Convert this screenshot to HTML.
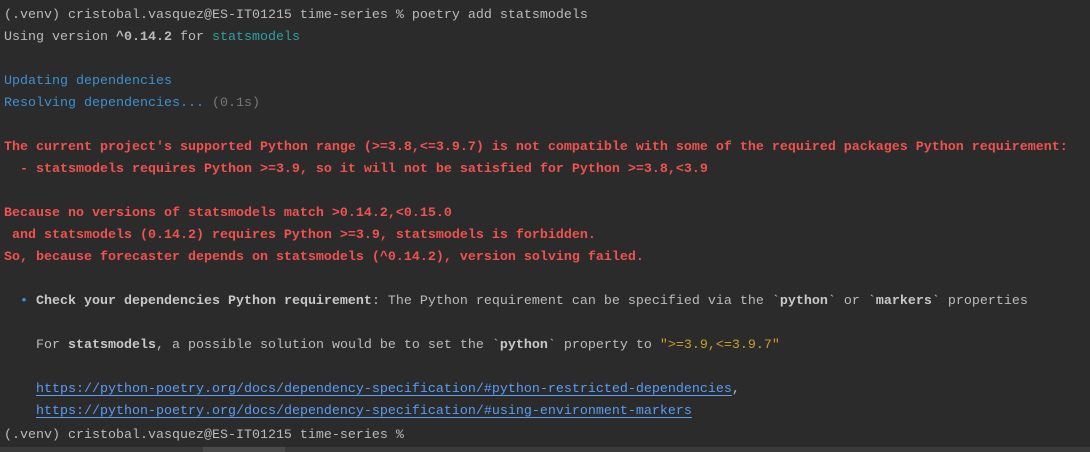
<!DOCTYPE html>
<html><head><meta charset="utf-8"><style>
html,body{margin:0;padding:0;background:#2b2b2b;width:1090px;height:452px;overflow:hidden}
pre{margin:0;padding:5px 0 0 4px;font-family:"Liberation Mono",monospace;font-size:13.33px;line-height:22px;color:#bbbbbb;white-space:pre}
.c{color:#2aa3a0}.b{color:#3f90d0}.g{color:#777}.r{color:#f0524f;font-weight:bold}
.w{font-weight:bold;color:#c8c8c8}.y{color:#c6a026}.l{color:#589df6;text-decoration:underline;text-underline-offset:3px}
.dot{color:#3f90d0}
.last{display:inline-block;margin-top:2px}
.bar{position:absolute;left:0;top:447px;width:1090px;height:5px;background:#3a3a3a}
.th{position:absolute;left:203px;top:447px;width:82px;height:5px;background:#4a4a4a}
</style></head><body>
<pre>(.venv) cristobal.vasquez@ES-IT01215 time-series % poetry add statsmodels
Using version <b>^0.14.2</b> for <span class="c">statsmodels</span>

<span class="b">Updating dependencies</span>
<span class="b">Resolving dependencies...</span> <span class="g">(0.1s)</span>

<span class="r">The current project's supported Python range (&gt;=3.8,&lt;=3.9.7) is not compatible with some of the required packages Python requirement:</span>
<span class="r">  - statsmodels requires Python &gt;=3.9, so it will not be satisfied for Python &gt;=3.8,&lt;3.9</span>

<span class="r">Because no versions of statsmodels match &gt;0.14.2,&lt;0.15.0</span>
<span class="r"> and statsmodels (0.14.2) requires Python &gt;=3.9, statsmodels is forbidden.</span>
<span class="r">So, because forecaster depends on statsmodels (^0.14.2), version solving failed.</span>

  <span class="dot">•</span> <span class="w">Check your dependencies Python requirement</span>: The Python requirement can be specified via the `<span class="w">python</span>` or `<span class="w">markers</span>` properties

    For <span class="w">statsmodels</span>, a possible solution would be to set the `<span class="w">python</span>` property to <span class="y">"&gt;=3.9,&lt;=3.9.7"</span>

    <span class="l">https://python-poetry.org/docs/dependency-specification/#python-restricted-dependencies</span>,
    <span class="l">https://python-poetry.org/docs/dependency-specification/#using-environment-markers</span>
<span class="last">(.venv) cristobal.vasquez@ES-IT01215 time-series %</span></pre>
<div class="bar"></div><div class="th"></div>
</body></html>
